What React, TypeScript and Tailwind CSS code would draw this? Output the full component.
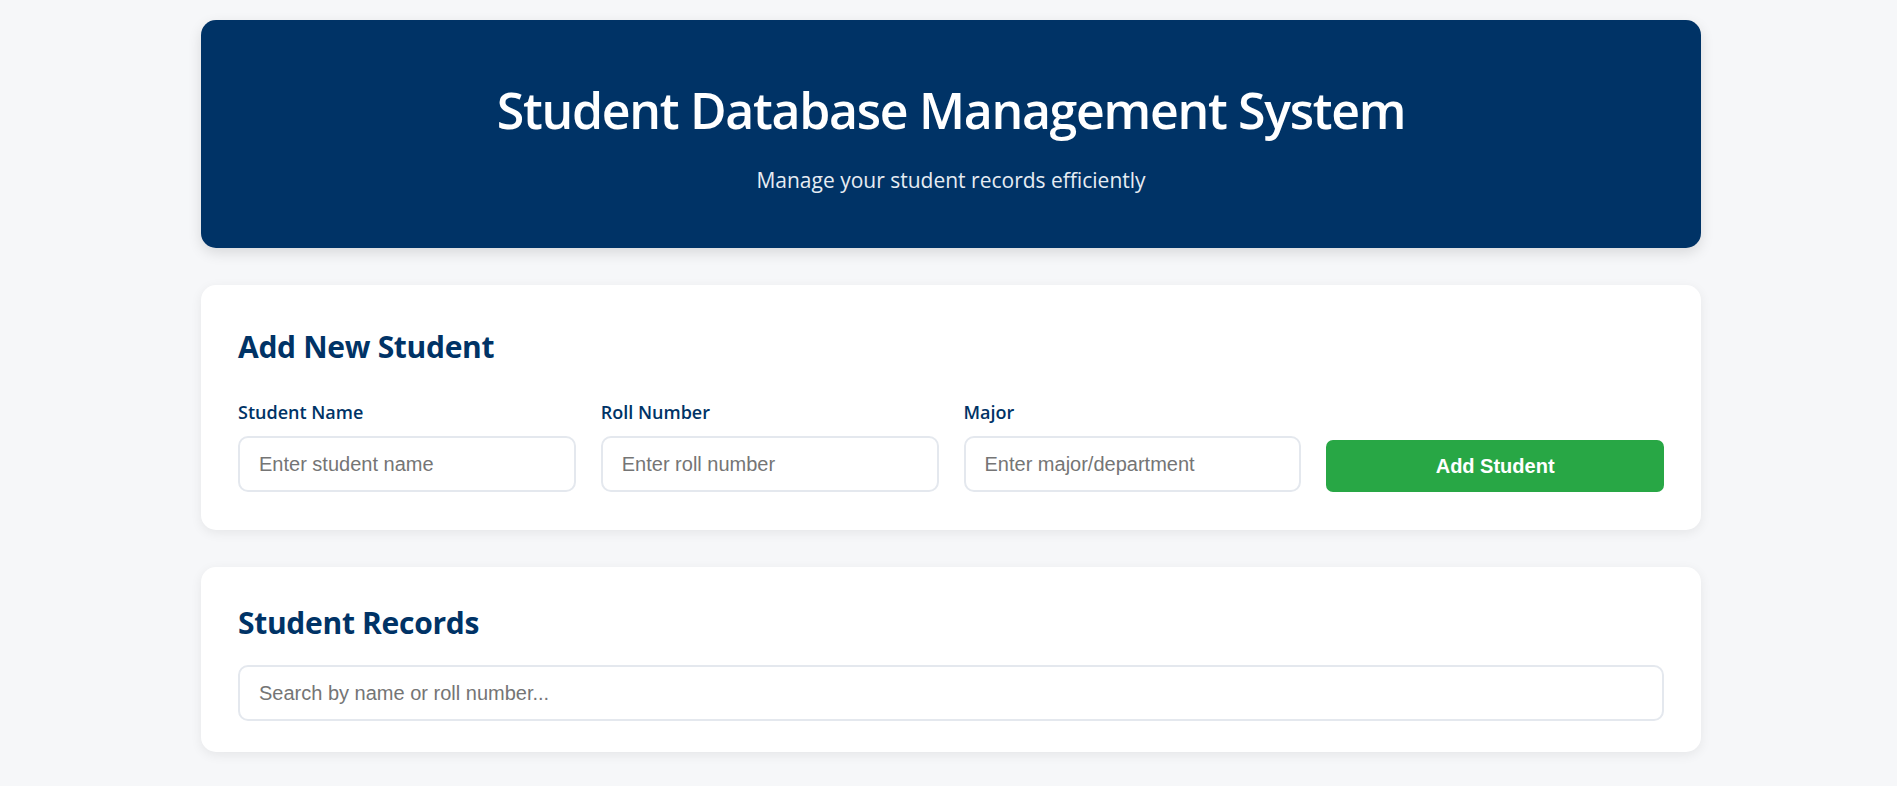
import { useState } from "react";

const labelCls =
  "block text-[18px] leading-[28px] font-semibold text-[#003366] mb-[10px]";
const inputCls =
  "w-full h-[56px] px-[19px] rounded-[10px] border-2 border-[#e4e8ee] bg-white text-[20px] text-[#333] placeholder:text-[#757575] outline-none focus:border-[#003366] font-['Liberation_Sans',Arial,sans-serif]";

export default function App() {
  const [name, setName] = useState("");
  const [roll, setRoll] = useState("");
  const [major, setMajor] = useState("");
  const [search, setSearch] = useState("");

  return (
    <div className="min-h-screen bg-[#f6f7f9] pt-[20px] pb-[40px] pl-[5px] font-['Open_Sans',sans-serif]">
      <div className="w-[1500px] mx-auto flex flex-col gap-[37px]">
        <header className="h-[228px] rounded-[15px] bg-[#003366] text-white text-center pt-[60px] shadow-[0_5px_14px_rgba(0,0,0,0.12)]">
          <h1 className="text-[50px] leading-[1.2] font-semibold tracking-[-1.3px]">
            Student Database Management System
          </h1>
          <p className="mt-[24px] text-[21px] leading-[33px] text-[#e6ecf3]">
            Manage your student records efficiently
          </p>
        </header>

        <section className="rounded-[15px] bg-white px-[37px] pt-[43px] pb-[38px] shadow-[0_3px_12px_rgba(0,0,0,0.07)]">
          <h2 className="text-[30px] leading-[38px] font-bold tracking-[-0.3px] text-[#003366] mb-[32px]">
            Add New Student
          </h2>
          <div className="grid grid-cols-4 gap-[25px] items-end">
            <div>
              <label className={labelCls}>Student Name</label>
              <input
                className={inputCls}
                placeholder="Enter student name"
                value={name}
                onChange={e => setName(e.target.value)}
              />
            </div>
            <div>
              <label className={labelCls}>Roll Number</label>
              <input
                className={inputCls}
                placeholder="Enter roll number"
                value={roll}
                onChange={e => setRoll(e.target.value)}
              />
            </div>
            <div>
              <label className={labelCls}>Major</label>
              <input
                className={inputCls}
                placeholder="Enter major/department"
                value={major}
                onChange={e => setMajor(e.target.value)}
              />
            </div>
            <button className="h-[52px] rounded-[7px] bg-[#28a745] text-white text-[20px] font-bold font-['Liberation_Sans',Arial,sans-serif] hover:bg-[#218838]">
              Add Student
            </button>
          </div>
        </section>

        <section className="rounded-[15px] bg-white px-[37px] pt-[37px] pb-[31px] shadow-[0_3px_12px_rgba(0,0,0,0.07)]">
          <h2 className="text-[30px] leading-[38px] font-bold tracking-[-0.3px] text-[#003366] mb-[23px]">
            Student Records
          </h2>
          <input
            className={inputCls}
            placeholder="Search by name or roll number..."
            value={search}
            onChange={e => setSearch(e.target.value)}
          />
        </section>
      </div>
    </div>
  );
}
